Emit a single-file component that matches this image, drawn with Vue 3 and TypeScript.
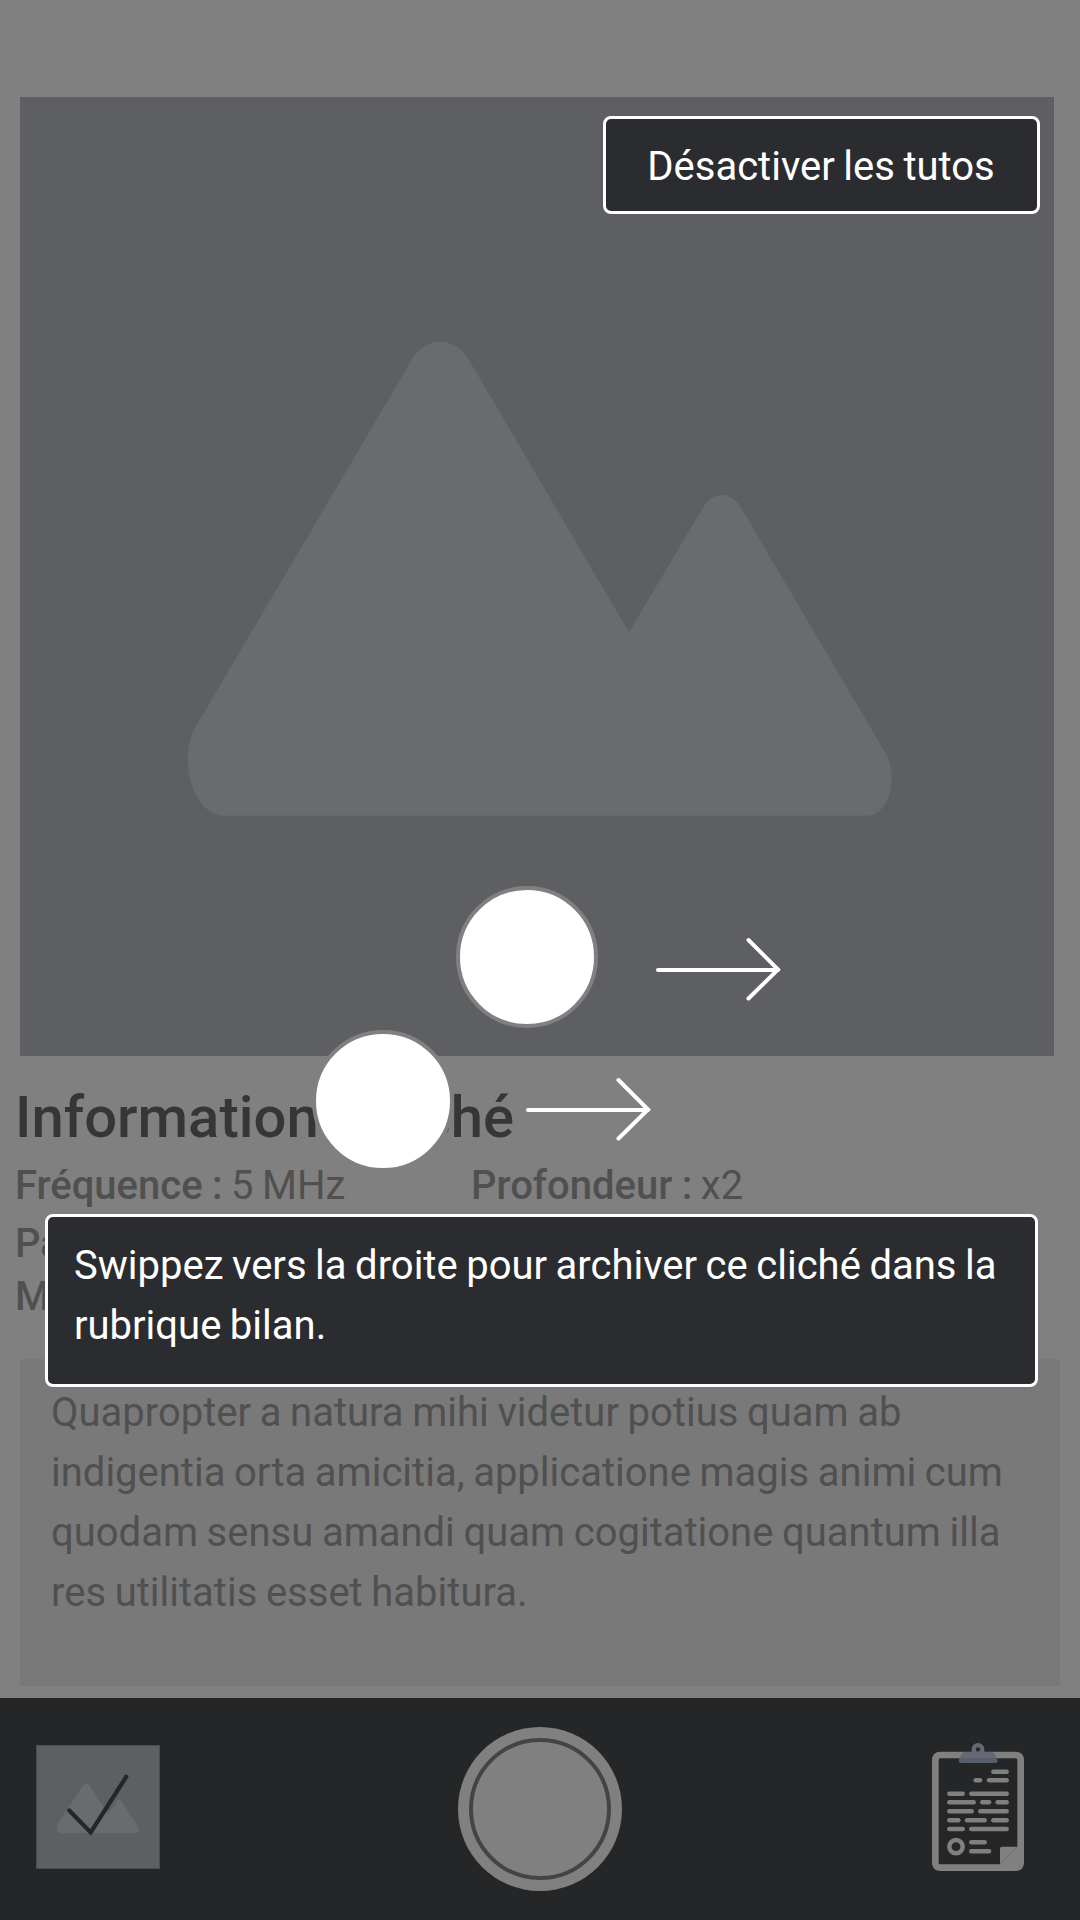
<script setup lang="ts">
const mountain =
  'M411.7 360C425 335.5 455 335.5 469 360L629 632.3L702.6 508.3C712.5 490.5 731 490.5 741.3 508.3L885.5 753C899 778 889 815.7 866.7 815.7H225C192 815.7 177 758 196.7 725Z'

interface Field { label: string; value: string }
const firstRow: Field[] = [
  { label: 'Fréquence :', value: '5 MHz' },
  { label: 'Profondeur :', value: 'x2' },
]

// Text strokes of the report icon: [x1, x2, y]
const strokes: number[][] = [
  [280, 320, 155], [227, 240, 181], [267, 320, 181],
  [148, 188, 221], [214, 320, 221],
  [148, 221, 247], [247, 267, 247], [293, 320, 247],
  [148, 215, 274], [241, 320, 274],
  [148, 175, 300.5], [201, 254, 300.5], [280, 320, 300.5],
  [148, 188, 327], [214, 320, 327],
  [214, 254, 367], [214, 267, 393.5],
]

const swipes = ['upper', 'lower']
</script>

<template>
  <div class="screen">
    <main class="content">
      <svg class="photo" viewBox="20 97 1034 959">
        <rect class="photo-bg" x="20" y="97" width="1034" height="959" />
        <path class="mountain" :d="mountain" />
      </svg>
      <h1 class="title">Informations cliché</h1>
      <div class="fields">
        <p v-for="f in firstRow" :key="f.label" class="field"><b>{{ f.label }}</b> {{ f.value }}</p>
      </div>
      <p class="field patient"><b>Pa</b></p>
      <p class="field doctor"><b>M</b></p>
      <section class="note">
        Quapropter a natura mihi videtur potius quam ab<br />
        indigentia orta amicitia, applicatione magis animi cum<br />
        quodam sensu amandi quam cogitatione quantum illa<br />
        res utilitatis esset habitura.
      </section>
    </main>

    <footer class="bar">
      <svg class="thumb" viewBox="36 1745 124 124">
        <rect x="36.5" y="1745.5" width="123" height="123" fill="#5e5f63" stroke="#4b4c4f" />
        <g transform="translate(34.9 1748.3) scale(.1165 .1038)">
          <path class="mountain" :d="mountain" />
        </g>
        <path d="M69.3 1810.5L90.7 1832.5L126.3 1776.7" fill="none" stroke="#252628" stroke-width="4.2" stroke-linecap="round" />
      </svg>
      <svg class="shutter" viewBox="0 0 164 164">
        <circle cx="82" cy="82" r="82" fill="#808080" />
        <circle cx="82" cy="82" r="69" fill="none" stroke="#444" stroke-width="4" />
      </svg>
      <svg class="report" viewBox="96 66 276 387">
        <path fill="#808080" fill-rule="evenodd" d="M122 95H346Q372 95 372 121V427Q372 453 346 453H122Q96 453 96 427V121Q96 95 122 95ZM121 115Q116 115 116 120V428Q116 433 121 433H300V386Q300 380 306 380H352V120Q352 115 347 115Z" />
        <path d="M300 433L352 380" stroke="#5e5f60" stroke-width="1.5" />
        <path fill="#656975" fill-rule="evenodd" d="M181 116V110Q184 96 198 96H215V88A19 19 0 0 1 253 88V96H271Q285 96 288 110V116ZM234 82A6.5 6.5 0 1 0 234 95A6.5 6.5 0 1 0 234 82Z" />
        <path fill="#595e6d" d="M180 115H289Q293 117 293 122Q293 129 286 129H183Q176 129 176 122Q176 117 180 115Z" />
        <path v-for="(s, i) in strokes" :key="i" :d="`M${s[0]} ${s[2]}H${s[1]}`" stroke="#808080" stroke-width="13.5" stroke-linecap="round" />
        <circle cx="168" cy="380" r="20" fill="none" stroke="#808080" stroke-width="13.5" />
      </svg>
    </footer>

    <button class="disable">Désactiver les tutos</button>
    <div v-for="s in swipes" :key="s" class="swipe" :class="s">
      <span class="finger"></span>
      <svg class="arrow" viewBox="0 0 126 64" fill="none" stroke="#fff" stroke-width="4" stroke-linecap="round">
        <path d="M3 33H123" />
        <path d="M93.5 3L123 32.5L93.5 61.5" />
      </svg>
    </div>
    <div class="tip">Swippez vers la droite pour archiver ce cliché dans la<br />rubrique bilan.</div>
  </div>
</template>

<style>
body { background: #808080; }
</style>

<style scoped>
.screen {
  position: relative;
  display: flex;
  flex-direction: column;
  width: 1080px;
  height: 1920px;
  overflow: hidden;
  background: #808080;
  color: #505050;
  font: 400 40px/60px Roboto, sans-serif;
  word-spacing: -1.4px;
}
.content { flex: 1; padding-top: 97px; }
.photo { display: block; width: 1034px; height: 959px; margin-left: 20px; }
.photo-bg { fill: #5e5f63; }
.mountain { fill: #6a6b6d; }
.title {
  margin: 26px 0 0 15px;
  color: #363636;
  font-size: 58px;
  font-weight: 500;
  line-height: 70px;
  word-spacing: -2.4px;
}
.fields { display: grid; grid-template-columns: 456px 1fr; margin: 4px 0 0 15px; }
.field { margin: 0; white-space: nowrap; }
.field b { font-weight: 500; word-spacing: -0.5px; }
.patient { margin: -2px 0 0 15px; }
.doctor { margin: -7px 0 0 15px; }
.note {
  box-sizing: border-box;
  width: 1040px;
  height: 327px;
  margin: 32px 0 0 20px;
  padding: 24px 0 0 31px;
  background: #797979;
  white-space: nowrap;
  word-spacing: -1.3px;
}
.bar {
  display: flex;
  align-items: flex-start;
  justify-content: space-between;
  box-sizing: border-box;
  height: 222px;
  padding: 29px 56px 0 36px;
  background: #252628;
}
.thumb { width: 124px; height: 124px; margin-top: 18px; }
.shutter { width: 164px; height: 164px; margin-right: 12px; }
.report { width: 92px; height: 129px; margin-top: 15px; }
.disable, .tip {
  position: absolute;
  box-sizing: border-box;
  border: 3px solid #fff;
  border-radius: 8px;
  background: #2b2c30;
  color: #fff;
  font: inherit;
  word-spacing: inherit;
  white-space: nowrap;
}
.disable { top: 116px; left: 603px; width: 437px; height: 98px; padding: 4px 1px 0 0; }
.tip { top: 1214px; left: 45px; width: 993px; height: 173px; padding: 19px 26px; }
.swipe { position: absolute; display: flex; align-items: center; }
.finger {
  box-sizing: border-box;
  width: 142px;
  height: 142px;
  border: 4px solid #808080;
  border-radius: 50%;
  background: #fff;
}
.arrow { width: 126px; height: 64px; }
.upper { top: 886px; left: 456px; gap: 57px; }
.upper .arrow { margin-top: 24px; }
.lower { top: 1030px; left: 312px; gap: 71px; }
.lower .arrow { margin-top: 16px; }
</style>
